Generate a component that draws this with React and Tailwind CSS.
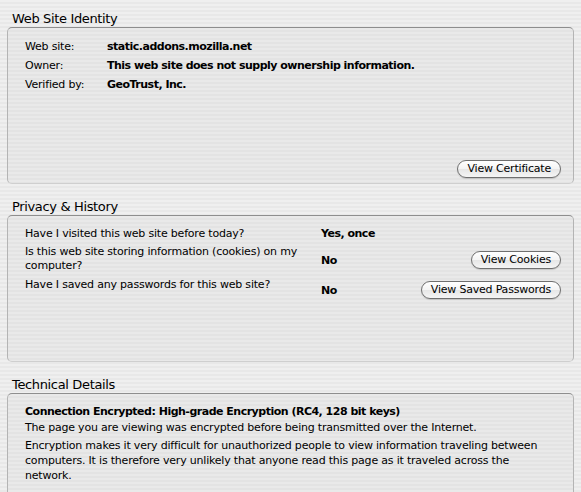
import React from "react";

// page info dialog, security/identity pane
const pinstripe =
  "bg-[repeating-linear-gradient(180deg,#efefef_0px,#efefef_2px,#e8e8e8_2px,#e8e8e8_4px)]";
const boxStripe =
  "bg-[repeating-linear-gradient(180deg,#e9e9e9_0px,#e9e9e9_2px,#e3e3e3_2px,#e3e3e3_4px)]";

function GroupBox({ title, className, children }) {
  return (
    <div className="flex flex-col">
      <div className="h-[16px] pl-[12px] pt-[1px] text-[13px] leading-[16px] tracking-[-0.35px] text-black">
        {title}
      </div>
      <div
        className={[
          "mx-[7px] mt-[1px] rounded-[5px] border border-[#b4b4b4] border-t-[#8e8e8e] border-b-[#cfcfcf]",
          boxStripe,
          className,
        ].join(" ")}
      >
        {children}
      </div>
    </div>
  );
}

function MacButton({ children }) {
  return (
    <button className="h-[18px] rounded-full border border-[#6f6f6f] bg-[linear-gradient(180deg,#ffffff_0%,#f4f4f4_50%,#e6e6e6_51%,#f5f5f5_100%)] px-[9px] text-[11px] leading-[16px] tracking-[-0.2px] text-black shadow-[0_1px_1px_rgba(0,0,0,0.15)]">
      {children}
    </button>
  );
}

const identity = [
  ["Web site:", "static.addons.mozilla.net"],
  ["Owner:", "This web site does not supply ownership information."],
  ["Verified by:", "GeoTrust, Inc."],
];

export default function App() {
  return (
    <div
      className={[
        "h-[492px] w-[581px] overflow-hidden pt-[10px] text-[11px] tracking-[-0.2px] text-black",
        pinstripe,
      ].join(" ")}
      style={{ fontFamily: '"DejaVu Sans", "Noto Sans", sans-serif' }}
    >
      <GroupBox title="Web Site Identity" className="flex h-[157px] flex-col justify-between">
        <div className="pl-[17px] pt-[9px]">
          {identity.map(([label, value]) => (
            <div key={label} className="flex leading-[19px]">
              <div className="w-[82px]">{label}</div>
              <div className="font-bold tracking-[-0.5px]">{value}</div>
            </div>
          ))}
        </div>
        <div className="mb-[5px] mr-[12px] self-end">
          <MacButton>View Certificate</MacButton>
        </div>
      </GroupBox>

      <div className="h-[14px]" />

      <GroupBox title="Privacy & History" className="h-[147px]">
        <div className="grid grid-cols-[296px_1fr_auto] pl-[17px] pr-[12px] pt-[11px] leading-[14px]">
          <div className="h-[18px]">Have I visited this web site before today?</div>
          <div className="font-bold tracking-[-0.5px]">Yes, once</div>
          <div />

          <div className="h-[33px] self-start pr-[4px]">
            Is this web site storing information (cookies) on my computer?
          </div>
          <div className="self-center pb-[2px] font-bold tracking-[-0.5px]">No</div>
          <div className="self-center pb-[4px] justify-self-end">
            <MacButton>View Cookies</MacButton>
          </div>

          <div className="self-start">Have I saved any passwords for this web site?</div>
          <div className="self-start pt-[6px] font-bold tracking-[-0.5px]">No</div>
          <div className="justify-self-end pt-[3px]">
            <MacButton>View Saved Passwords</MacButton>
          </div>
        </div>
      </GroupBox>

      <div className="h-[14px]" />

      <GroupBox title="Technical Details" className="h-[120px]">
        <div className="max-w-[540px] pl-[17px] pt-[10px] leading-[15px]">
          <div className="font-bold tracking-[-0.5px]">
            Connection Encrypted: High-grade Encryption (RC4, 128 bit keys)
          </div>
          <div className="mt-[1px]">
            The page you are viewing was encrypted before being transmitted over the Internet.
          </div>
          <div className="mt-[3px]">
            Encryption makes it very difficult for unauthorized people to view information traveling
            between computers. It is therefore very unlikely that anyone read this page as it traveled
            across the network.
          </div>
        </div>
      </GroupBox>
    </div>
  );
}
